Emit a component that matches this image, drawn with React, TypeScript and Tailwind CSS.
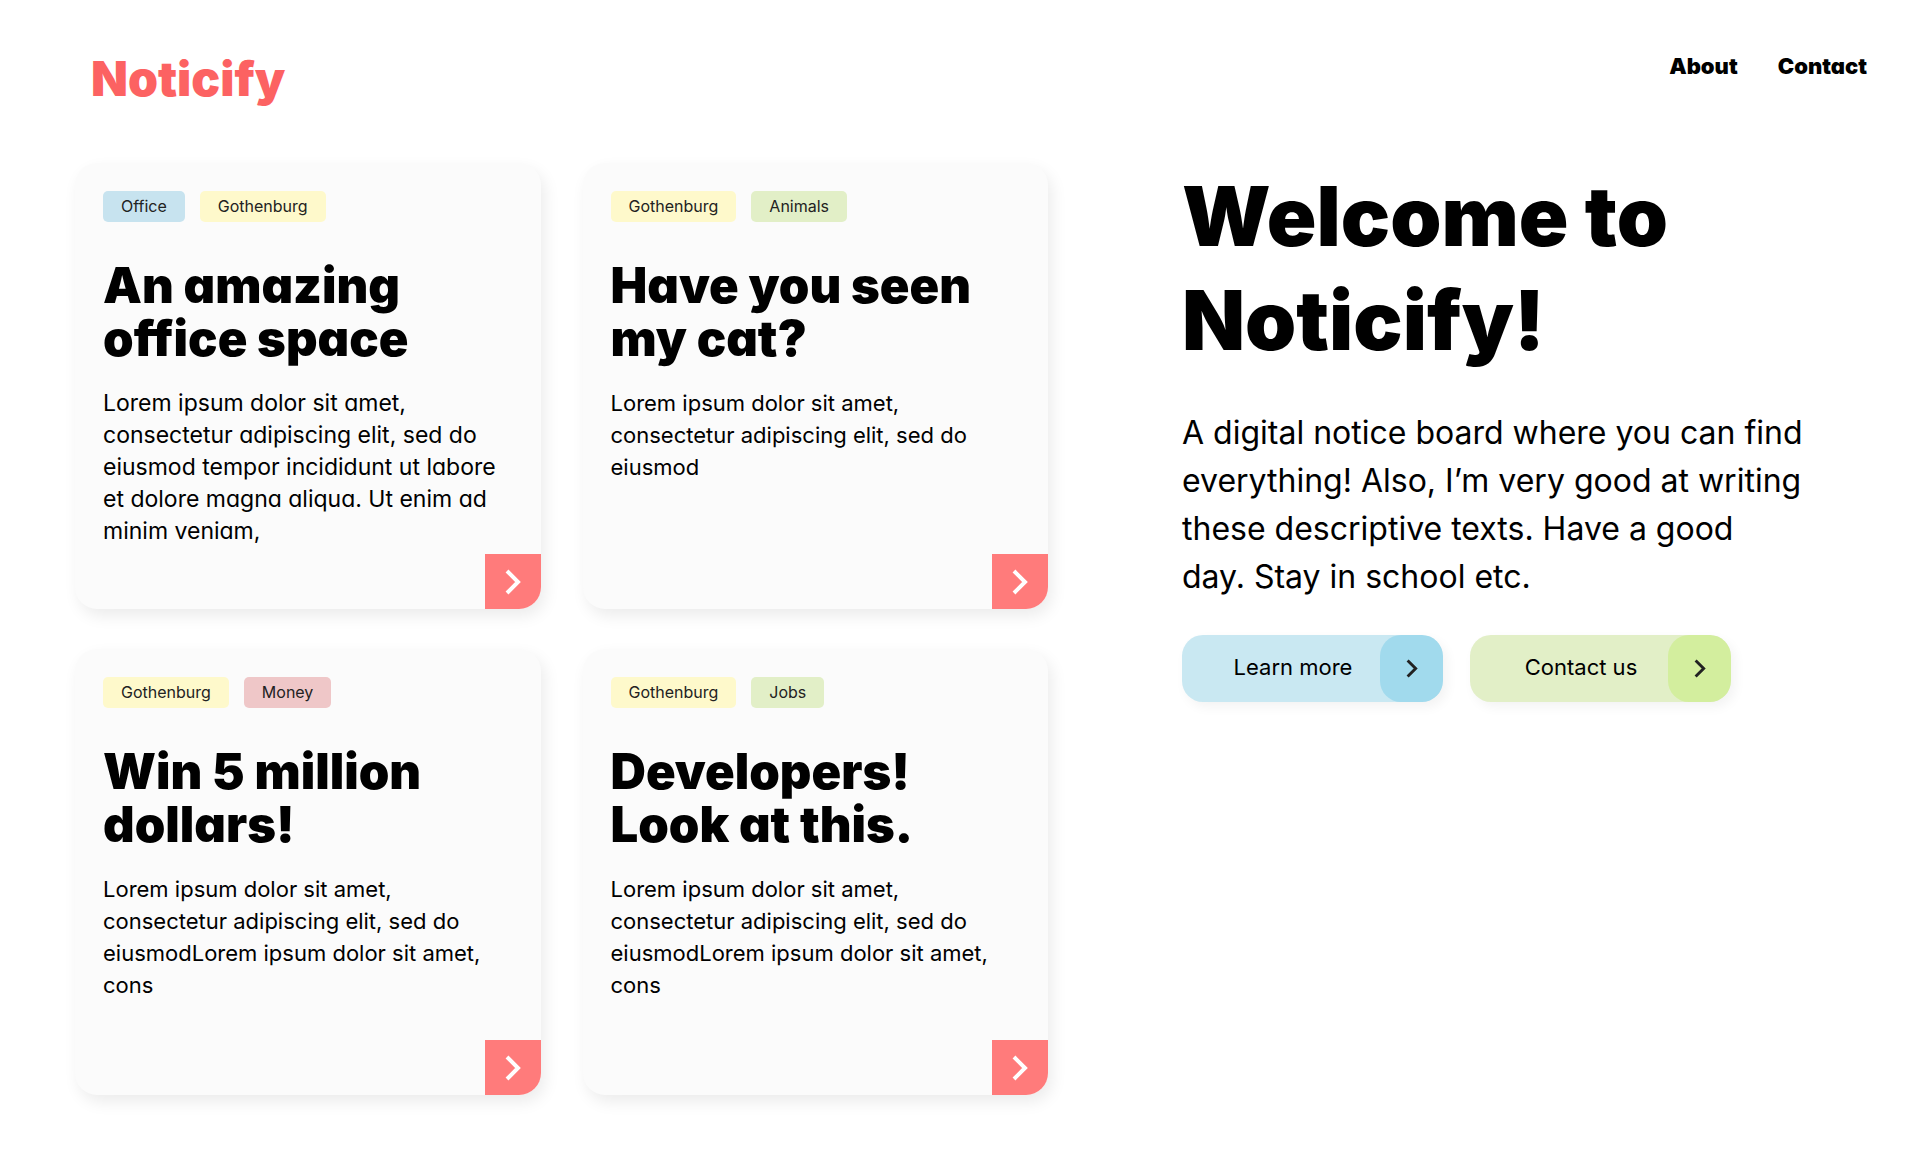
type TagColor = "blue" | "yellow" | "green" | "red";

type Notice = {
  tags: { label: string; color: TagColor }[];
  title: string;
  body: string;
  geometric?: boolean;
};

const tagColors: Record<TagColor, string> = {
  blue: "bg-[#c7e3ef]",
  yellow: "bg-[#fef9cb]",
  green: "bg-[#e2efc7]",
  red: "bg-[#efc7c8]",
};

const notices: Notice[] = [
  {
    tags: [
      { label: "Office", color: "blue" },
      { label: "Gothenburg", color: "yellow" },
    ],
    title: "An amazing office space",
    body: "Lorem ipsum dolor sit amet, consectetur adipiscing elit, sed do eiusmod tempor incididunt ut labore et dolore magna aliqua. Ut enim ad minim veniam,",
    geometric: true,
  },
  {
    tags: [
      { label: "Gothenburg", color: "yellow" },
      { label: "Animals", color: "green" },
    ],
    title: "Have you seen my cat?",
    body: "Lorem ipsum dolor sit amet, consectetur adipiscing elit, sed do eiusmod",
  },
  {
    tags: [
      { label: "Gothenburg", color: "yellow" },
      { label: "Money", color: "red" },
    ],
    title: "Win 5 million dollars!",
    body: "Lorem ipsum dolor sit amet, consectetur adipiscing elit, sed do eiusmodLorem ipsum dolor sit amet, cons",
  },
  {
    tags: [
      { label: "Gothenburg", color: "yellow" },
      { label: "Jobs", color: "green" },
    ],
    title: "Developers! Look at this.",
    body: "Lorem ipsum dolor sit amet, consectetur adipiscing elit, sed do eiusmodLorem ipsum dolor sit amet, cons",
  },
];

function Chevron({ className }: { className: string }) {
  return (
    <svg viewBox="0 0 16 26" fill="none" stroke="currentColor" strokeWidth="4" className={className} aria-hidden="true">
      <path d="M2 2 L13 13 L2 24" />
    </svg>
  );
}

function NoticeCard({ notice }: { notice: Notice }) {
  return (
    <article className="flex min-h-[446px] flex-col overflow-hidden rounded-[22px] bg-[#fbfbfb] shadow-[4px_7px_16px_rgba(0,0,0,0.08)]">
      <div className="px-7 pt-7">
        <ul className="flex gap-[15px]">
          {notice.tags.map((tag) => (
            <li
              key={tag.label}
              className={`rounded-[5px] px-[18px] text-base leading-[31px] text-[#222] ${tagColors[tag.color]}`}
            >
              {tag.label}
            </li>
          ))}
        </ul>
        <h2 className="mt-[37px] max-w-[380px] text-[49px] leading-[53px] font-black [font-feature-settings:'cv11']">
          {notice.title}
        </h2>
        <p
          className={`mt-[22px] leading-8 ${
            notice.geometric
              ? "max-w-[410px] text-[23px] [font-feature-settings:'cv11']"
              : "max-w-[390px] text-[22px]"
          }`}
        >
          {notice.body}
        </p>
      </div>
      <button
        type="button"
        aria-label={`Open ${notice.title}`}
        className="mt-auto flex h-[55px] w-14 items-center justify-center self-end bg-[#ff7b7b] text-white"
      >
        <Chevron className="h-[26px] w-4" />
      </button>
    </article>
  );
}

function PillButton({ label, base, accent }: { label: string; base: string; accent: string }) {
  return (
    <button
      type="button"
      className={`flex h-[67px] w-[261px] overflow-hidden rounded-[21px] text-[22px] shadow-[4px_5px_12px_rgba(0,0,0,0.05)] ${base}`}
    >
      <span className="flex h-full flex-1 items-center justify-center pb-[2px] pl-6">{label}</span>
      <span className={`flex h-full w-[63px] items-center justify-center rounded-[21px] text-[#222] ${accent}`}>
        <Chevron className="h-[19px] w-3" />
      </span>
    </button>
  );
}

export default function App() {
  return (
    <div className="min-h-screen bg-white pr-[54px] pb-[72px] pl-[75px] font-['Inter',sans-serif] text-black">
      <header className="flex h-[163px] items-start justify-between">
        <a
          href="#"
          className="mt-[55px] ml-4 text-[48px] leading-[48px] font-black text-[#fc6262] [font-feature-settings:'cv11']"
        >
          Noticify
        </a>
        <nav className="mt-[50px] flex gap-10 text-[22px] leading-8 font-black [font-feature-settings:'cv11']">
          <a href="#about">About</a>
          <a href="#contact">Contact</a>
        </nav>
      </header>

      <main className="grid grid-cols-[973fr_685fr] gap-[134px]">
        <section aria-label="Notices" className="grid grid-cols-2 content-start gap-x-[42px] gap-y-10">
          {notices.map((notice) => (
            <NoticeCard key={notice.title} notice={notice} />
          ))}
        </section>

        <section className="pt-[2px]">
          <h1 className="text-[82px] leading-[104px] font-black [font-feature-settings:'cv11']">
            Welcome to Noticify!
          </h1>
          <p className="mt-9 max-w-[622px] text-[32px] leading-[48px]">
            A digital notice board where you can find everything! Also, I’m very good at writing these descriptive
            texts. Have a good day. Stay in school etc.
          </p>
          <div className="mt-[34px] flex flex-wrap gap-[27px]">
            <PillButton label="Learn more" base="bg-[#c9e8f2]" accent="bg-[#a1daed]" />
            <PillButton label="Contact us" base="bg-[#e2efc7]" accent="bg-[#d3ee9e]" />
          </div>
        </section>
      </main>
    </div>
  );
}
